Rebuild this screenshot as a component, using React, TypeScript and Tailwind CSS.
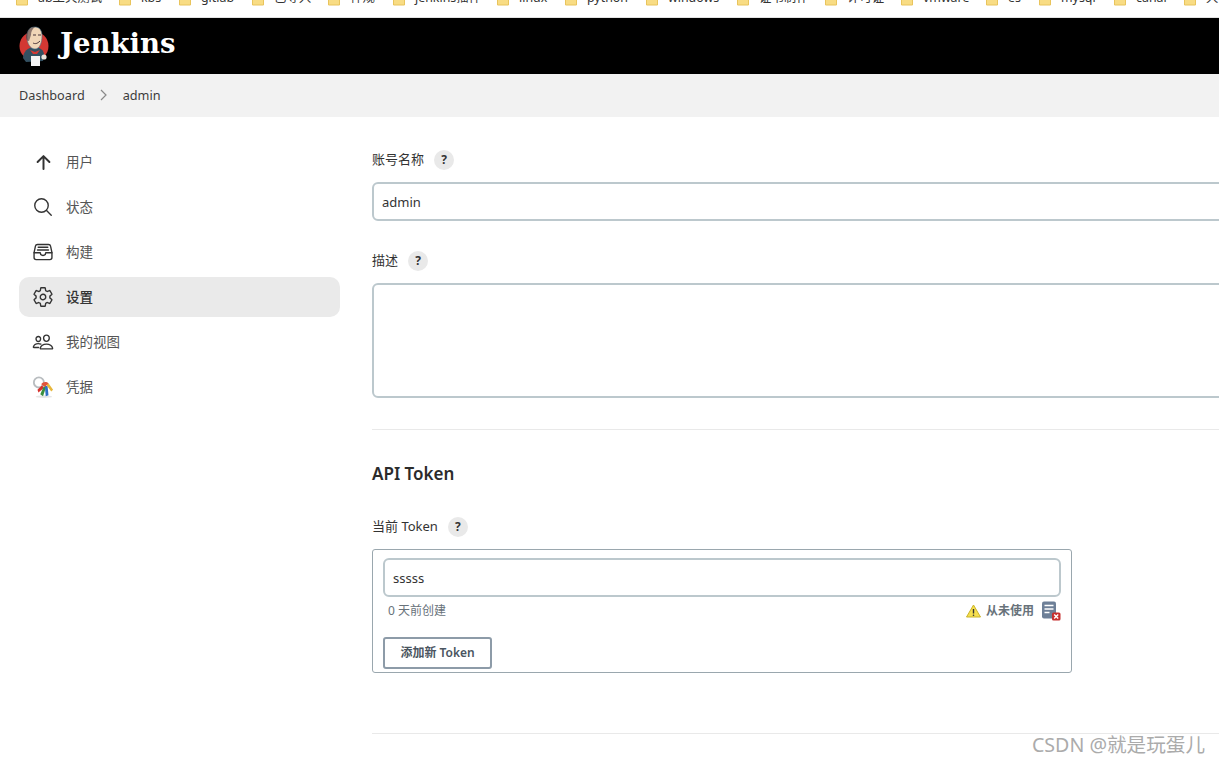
import type { ReactNode } from "react";
import {
  IoArrowUpOutline,
  IoFileTrayFullOutline,
  IoPeopleOutline,
  IoSearchOutline,
  IoSettingsOutline,
} from "react-icons/io5";

const font = "font-['Noto_Sans','Noto_Sans_CJK_SC',sans-serif]";

const bookmarks = [
  { label: "ab工具测试", width: "w-[103px]" },
  { label: "kbs", width: "w-[60px]" },
  { label: "gitlab", width: "w-[73px]" },
  { label: "已导入", width: "w-[76px]" },
  { label: "神规", width: "w-[65px]" },
  { label: "jenkins插件", width: "w-[104px]" },
  { label: "linux", width: "w-[68px]" },
  { label: "python", width: "w-[81px]" },
  { label: "windows", width: "w-[91px]" },
  { label: "证书制作", width: "w-[88px]" },
  { label: "许可证", width: "w-[76px]" },
  { label: "vmware", width: "w-[85px]" },
  { label: "es", width: "w-[53px]" },
  { label: "mysql", width: "w-[75px]" },
  { label: "canal", width: "w-[70px]" },
  { label: "大", width: "w-[40px]" },
];

function FolderIcon() {
  return (
    <svg width="12" height="16" viewBox="0 0 12 16" className="shrink-0">
      <path d="M0.5 1h4l1.5 2h5.5v12h-11z" fill="#f8dc84" stroke="#e9c45c" />
    </svg>
  );
}

function BookmarkBar() {
  return (
    <div className="h-[18px] overflow-hidden border-b border-[#e3e3e3] bg-white">
      <div className="-mt-[10px] flex pl-4">
        {bookmarks.map((b) => (
          <div key={b.label} className={`flex shrink-0 items-center gap-[10px] ${b.width}`}>
            <FolderIcon />
            <span className="text-[12.4px] leading-4 whitespace-nowrap text-[#333]">{b.label}</span>
          </div>
        ))}
      </div>
    </div>
  );
}

function JenkinsLogo() {
  return (
    <svg width="34" height="42" viewBox="0 0 34 42" className="shrink-0">
      <circle cx="16" cy="21" r="14.5" fill="#d33833" />
      <path d="M5 33c0-6 5-11 11-11s10 3 10 8l-1 6-17 1z" fill="#335061" />
      <path d="M9 12c0-7 3-10 8-10s7 4 7 9c0 6-2 13-7 13-5 0-8-6-8-12z" fill="#f0d6b7" stroke="#49728b" strokeWidth="0.6" />
      <path d="M8 11c1-5 4-9 9-9-3 2-4 5-4 8l-2 6c-2 0-3-2-3-5z" fill="#49363a" opacity="0.6" />
      <path d="M15 10h3M20 10h3M15 18c2 1 4 1 7-2" stroke="#49363a" strokeWidth="1" fill="none" />
      <path d="M12 25l5 2 5-2-3 4h-4z" fill="#d33833" />
      <path d="M13 31h9v10h-9z" fill="#f4f4f4" />
      <circle cx="26" cy="32" r="2.6" fill="#e8e2da" />
    </svg>
  );
}

function KeysIcon() {
  return (
    <svg width="24" height="24" viewBox="0 0 24 24">
      <ellipse cx="13" cy="22.5" rx="9" ry="1.5" fill="#e6e6e6" />
      <circle cx="7.5" cy="7" r="5.5" fill="none" stroke="#b9bdc0" strokeWidth="2" />
      <path d="M11 10l-5 5 1 3 6-5z" fill="#d6312c" />
      <path d="M13 11l-4 9 3 2 3-9z" fill="#3a8f3f" />
      <path d="M14 11l1 11 3-1-1-10z" fill="#2f6fc4" />
      <path d="M15 9l6 8 2-2-5-7z" fill="#e7b73c" />
      <path d="M10 9c2-3 6-3 8-1l-4 4z" fill="#e2543a" />
    </svg>
  );
}

function WarningIcon() {
  return (
    <svg width="15" height="14" viewBox="0 0 15 14" className="shrink-0">
      <path d="M7.5 1L14.5 13H0.5z" fill="#f6df4e" stroke="#c9b32b" strokeLinejoin="round" />
      <path d="M7.5 5v4.5" stroke="#333" strokeWidth="1.4" />
      <circle cx="7.5" cy="11.2" r="0.8" fill="#333" />
    </svg>
  );
}

function TokenDeleteIcon() {
  return (
    <svg width="20" height="20" viewBox="0 0 20 20" className="shrink-0">
      <rect x="1" y="0.5" width="14" height="17" rx="2" fill="#6d7f97" />
      <path d="M3.5 4.5h9M3.5 8h9M3.5 11.5h5" stroke="#fff" strokeWidth="1.5" />
      <rect x="11" y="11.5" width="8.5" height="8" rx="1.5" fill="#c62f2f" />
      <path d="M13.2 13.5l4 4M17.2 13.5l-4 4" stroke="#fff" strokeWidth="1.4" />
    </svg>
  );
}

function SideItem({ icon, label, active }: { icon: ReactNode; label: string; active?: boolean }) {
  return (
    <div className={`flex h-10 items-center gap-3 rounded-[10px] pl-[13px] ${active ? "bg-[#eaeaea] font-medium text-[#333]" : "text-[#555]"}`}>
      <span className="flex w-[22px] justify-center text-[#333]">{icon}</span>
      <span className="text-[13.5px]">{label}</span>
    </div>
  );
}

function Help() {
  return (
    <span className="flex h-5 w-5 items-center justify-center rounded-full bg-[#e9e9e9] text-xs font-bold text-[#333]">?</span>
  );
}

function FieldLabel({ text }: { text: string }) {
  return (
    <div className="flex items-center gap-[10px] text-[13px] text-[#333]">
      <span>{text}</span>
      <Help />
    </div>
  );
}

export default function App() {
  return (
    <div className={`relative h-[765px] w-full overflow-hidden bg-white ${font}`}>
      <BookmarkBar />

      <header className="flex h-14 items-center gap-2 bg-black pl-[18px]">
        <JenkinsLogo />
        <span className="-mt-1 font-['DejaVu_Serif',serif] text-[27.5px] leading-none font-bold text-white">Jenkins</span>
      </header>

      <nav className="flex h-[43px] items-center bg-[#f2f2f2] pt-px pl-[19px] text-[12.7px] text-[#3d3d3d]">
        <span>Dashboard</span>
        <svg width="8" height="12" viewBox="0 0 8 12" className="mr-[15px] ml-[15px] -mt-[3px]">
          <path d="M1 1l5 5-5 5" fill="none" stroke="#8a8a8a" strokeWidth="1.2" />
        </svg>
        <span>admin</span>
      </nav>

      <div className="flex">
        <aside className="flex w-[372px] shrink-0 flex-col gap-[5px] pt-[25px] pr-8 pl-[19px]">
          <SideItem icon={<IoArrowUpOutline size={21} />} label="用户" />
          <SideItem icon={<IoSearchOutline size={22} />} label="状态" />
          <SideItem icon={<IoFileTrayFullOutline size={22} />} label="构建" />
          <SideItem icon={<IoSettingsOutline size={22} />} label="设置" active />
          <SideItem icon={<IoPeopleOutline size={22} />} label="我的视图" />
          <SideItem icon={<KeysIcon />} label="凭据" />
        </aside>

        <main className="min-w-0 flex-1 pt-[33px]">
          <FieldLabel text="账号名称" />
          <input
            readOnly
            value="admin"
            className="mt-[12px] block h-[39px] w-[1000px] rounded-md border-2 border-[#bcc8cd] px-2 text-[13px] text-[#333] outline-none"
          />

          <div className="mt-[30px]">
            <FieldLabel text="描述" />
          </div>
          <div className="mt-[12px] h-[115px] w-[1000px] rounded-md border-2 border-[#bcc8cd]" />

          <div className="mt-[31px] h-px w-[1000px] bg-[#e9e9e9]" />

          <h2 className="mt-[32px] text-[17px] leading-6 font-semibold text-[#2b2b2b]">API Token</h2>

          <div className="mt-[31px]">
            <FieldLabel text="当前 Token" />
          </div>

          <div className="mt-[12px] h-[124px] w-[700px] rounded-[3px] border border-[#9aa7ae] px-[10px] pt-2">
            <input
              readOnly
              value="sssss"
              className="block h-[39px] w-full rounded-md border-2 border-[#bcc8cd] px-2 text-[13px] text-[#333] outline-none"
            />
            <div className="mt-[3px] flex h-[22px] items-center pl-[5px] text-xs text-[#68727a]">
              <span>0 天前创建</span>
              <span className="ml-auto flex items-center gap-[5px] font-semibold">
                <WarningIcon />
                从未使用
              </span>
              <span className="ml-[7px]">
                <TokenDeleteIcon />
              </span>
            </div>
            <button
              type="button"
              className="mt-[15px] flex h-8 w-[109px] items-center justify-center rounded-[3px] border-2 border-[#8d9ba8] text-xs font-semibold text-[#4a5560]"
            >
              添加新 Token
            </button>
          </div>

          <div className="mt-[60px] h-px w-[1000px] bg-[#e9e9e9]" />
        </main>
      </div>

      <span className="absolute right-[14px] bottom-[6px] text-[19.6px] text-[#ababab]">CSDN @就是玩蛋儿</span>
    </div>
  );
}
